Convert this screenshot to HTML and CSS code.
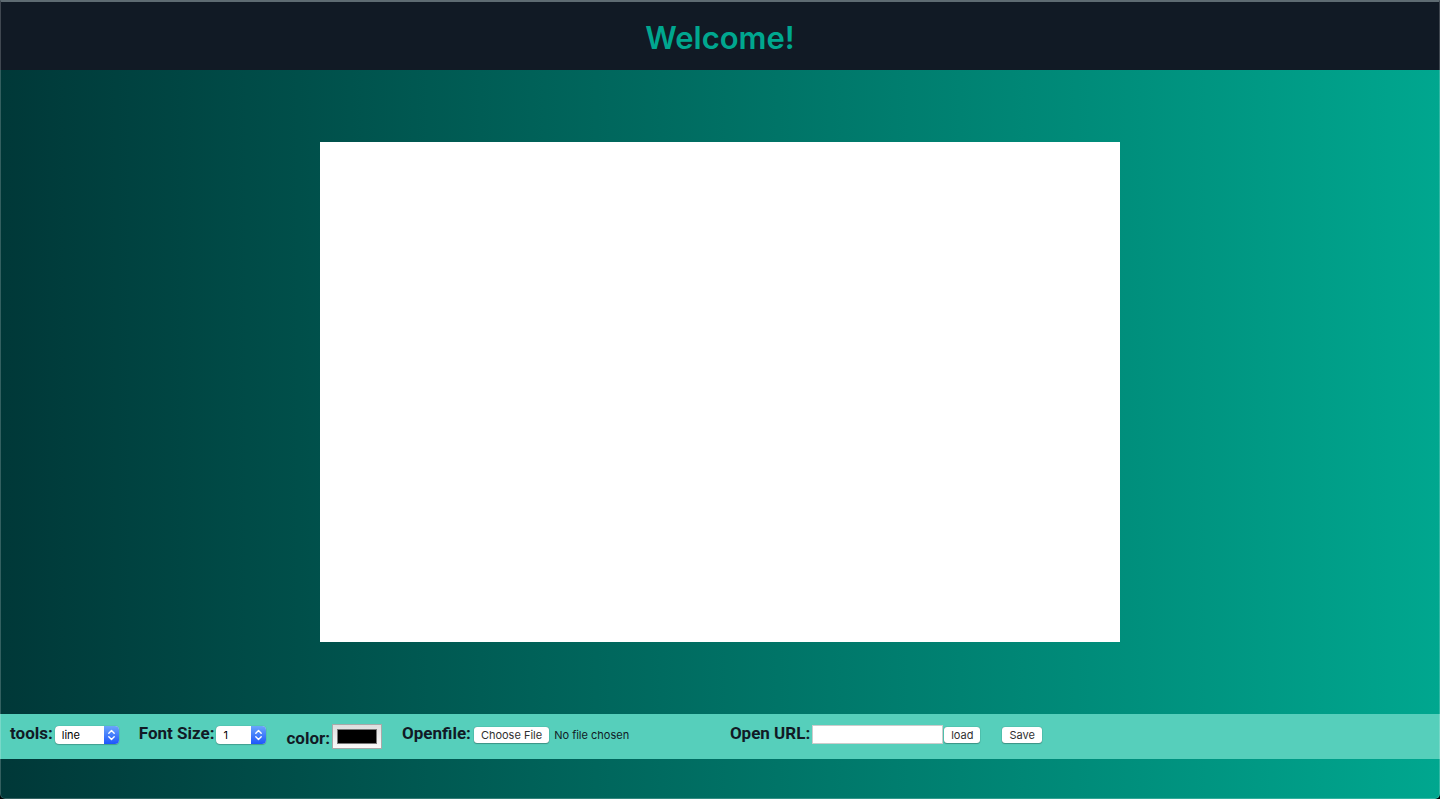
FILE: index.html
```html
<!DOCTYPE html>
<html lang="en">
<head>
<meta charset="utf-8">
<title>Welcome</title>
<link rel="stylesheet" href="styles.css">
</head>
<body>
<div class="window">
  <header class="header"><h1 class="title">Welcome!</h1></header>
  <main class="stage">
    <canvas class="board" width="800" height="500"></canvas>
  </main>
  <form class="toolbar">
    <div class="field">
      <label for="tool">tools:</label>
      <span class="select">
        <select id="tool" class="select-box select-wide"><option>line</option></select>
        <svg class="select-arrows" viewBox="0 0 15 18" aria-hidden="true"><path d="M4.8 7.3 7.5 4.6l2.7 2.7M4.8 10.7l2.7 2.7 2.7-2.7"/></svg>
      </span>
    </div>
    <div class="field">
      <label for="size">Font Size:</label>
      <span class="select">
        <select id="size" class="select-box"><option>1</option></select>
        <svg class="select-arrows" viewBox="0 0 15 18" aria-hidden="true"><path d="M4.8 7.3 7.5 4.6l2.7 2.7M4.8 10.7l2.7 2.7 2.7-2.7"/></svg>
      </span>
    </div>
    <div class="field field-color">
      <label for="color">color:</label>
      <input id="color" class="color" type="color" value="#000000">
    </div>
    <div class="field">
      <label for="file">Openfile:</label>
      <input id="file" class="file" type="file">
    </div>
    <div class="field">
      <label for="url">Open URL:</label>
      <input id="url" class="url" type="text">
      <button class="button" type="button">load</button>
    </div>
    <button class="button" type="button">Save</button>
  </form>
</div>
</body>
</html>
```
FILE: styles.css
```css
* { box-sizing: border-box; }
html { background: #000; }
body {
  margin: 0;
  font-family: Inter, "Liberation Sans", sans-serif;
  color: #111a25;
}
.window {
  position: relative;
  min-height: 100vh;
  overflow: hidden;
  border-radius: 0 0 5px 5px;
  background: linear-gradient(to right, #003838, #00a78f);
}
.window::after {
  content: "";
  position: absolute;
  inset: 0;
  border: 1px solid rgba(255, 255, 255, 0.2);
  border-top: 2px solid #5e6b72;
  border-radius: 0 0 5px 5px;
  pointer-events: none;
}
.header {
  padding: 18px 0 12px;
  background: #111a25;
  text-align: center;
}
.title {
  margin: 0;
  font-size: 31px;
  line-height: 40px;
  font-weight: 600;
  color: #00a78f;
}
.stage {
  display: flex;
  justify-content: center;
  padding: 72px 0;
}
.board { display: block; background: #fff; }
.toolbar {
  display: flex;
  align-items: flex-start;
  gap: 20px;
  padding: 10px;
  background: #56cfbb;
}
.field { display: flex; align-items: flex-start; }
.field label {
  padding-right: 2px;
  font-family: Roboto, sans-serif;
  font-size: 17px;
  line-height: 18px;
  font-weight: 700;
  white-space: nowrap;
}
.select { position: relative; display: flex; margin-top: 2px; }
.select-box {
  appearance: none;
  width: 50px;
  height: 18px;
  padding: 0 15px 0 7px;
  border: 0;
  border-radius: 4px;
  background: #fff;
  box-shadow: 0 0 1px rgba(0, 0, 0, 0.4), 0 1px 1px rgba(0, 0, 0, 0.2);
  font: 11px/18px Inter, sans-serif;
  color: #000;
}
.select-wide { width: 64px; }
.select-arrows {
  position: absolute;
  top: 0;
  right: 0;
  width: 15px;
  height: 18px;
  border-radius: 0 4px 4px 0;
  background: linear-gradient(#6ba5fb, #1e57fb);
  fill: none;
  stroke: #fff;
  stroke-width: 1.4;
  stroke-linecap: round;
  stroke-linejoin: round;
  pointer-events: none;
}
.field-color label { padding-top: 5px; }
.color {
  appearance: none;
  width: 50px;
  height: 25px;
  padding: 4px;
  border: 1px solid #a9a9a9;
  background: linear-gradient(#dedede, #fafafa);
}
.color::-webkit-color-swatch-wrapper { padding: 0; }
.color::-webkit-color-swatch { border: 1px solid #777; border-radius: 0; }
.file {
  width: 237px;
  height: 20px;
  margin-top: 2px;
  padding: 0 1px;
  font: 11px/18px Inter, sans-serif;
}
.button,
.file::file-selector-button {
  height: 16px;
  padding: 0 7px;
  border: 0;
  border-radius: 3px;
  background: #fff;
  box-shadow: 0 0 1px rgba(0, 0, 0, 0.5), 0 1px 1px rgba(0, 0, 0, 0.25);
  font: 11px/16px Inter, sans-serif;
  color: #303030;
}
.file::file-selector-button { margin: 1px 5px 0 0; }
.button { margin: 3px 1px 0; }
.url {
  width: 131px;
  height: 19px;
  margin-top: 1px;
  padding: 0 3px;
  border: 1px solid #ccc;
  background: #fff;
  font: 11px/17px Inter, sans-serif;
}
```
